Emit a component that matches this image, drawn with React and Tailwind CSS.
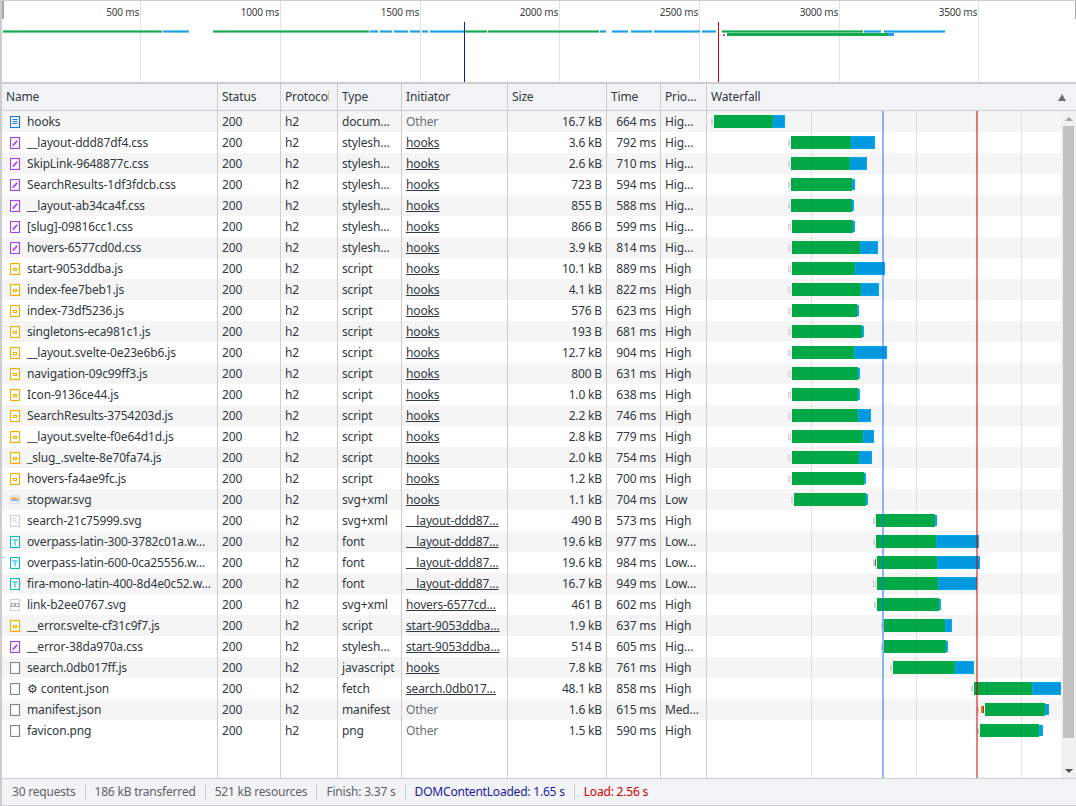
// App.jsx
// Panel de red de DevTools: vista general, tabla de peticiones y cascada
const COLS = 'grid grid-cols-[216px_63px_57px_64px_106px_99px_54px_46px_1fr]'
const CELL = 'border-r border-[#cdcdcf] px-1 overflow-hidden whitespace-nowrap'

// name, type, initiator, size, time, priority, icon, [espera inicio, espera fin, verde inicio, verde fin, azul fin]
const FILAS = [
  ['hooks', 'docum…', 'Other', '16.7 kB', '664 ms', 'Hig…', 'doc', [711, 713, 714, 773, 785]],
  ['__layout-ddd87df4.css', 'stylesh…', 'hooks', '3.6 kB', '792 ms', 'Hig…', 'css', [788, 790, 791, 851, 875]],
  ['SkipLink-9648877c.css', 'stylesh…', 'hooks', '2.6 kB', '710 ms', 'Hig…', 'css', [788, 790, 791, 850, 867]],
  ['SearchResults-1df3fdcb.css', 'stylesh…', 'hooks', '723 B', '594 ms', 'Hig…', 'css', [788, 790, 791, 852, 855]],
  ['__layout-ab34ca4f.css', 'stylesh…', 'hooks', '855 B', '588 ms', 'Hig…', 'css', [788, 790, 791, 852, 854]],
  ['[slug]-09816cc1.css', 'stylesh…', 'hooks', '866 B', '599 ms', 'Hig…', 'css', [788, 791, 792, 853, 855, true]],
  ['hovers-6577cd0d.css', 'stylesh…', 'hooks', '3.9 kB', '814 ms', 'Hig…', 'css', [788, 791, 792, 860, 878, true]],
  ['start-9053ddba.js', 'script', 'hooks', '10.1 kB', '889 ms', 'High', 'js', [788, 791, 792, 855, 885, true]],
  ['index-fee7beb1.js', 'script', 'hooks', '4.1 kB', '822 ms', 'High', 'js', [788, 791, 792, 861, 879, true]],
  ['index-73df5236.js', 'script', 'hooks', '576 B', '623 ms', 'High', 'js', [788, 791, 792, 857, 858, true]],
  ['singletons-eca981c1.js', 'script', 'hooks', '193 B', '681 ms', 'High', 'js', [788, 791, 792, 862, 864, true]],
  ['__layout.svelte-0e23e6b6.js', 'script', 'hooks', '12.7 kB', '904 ms', 'High', 'js', [788, 791, 792, 854, 887, true]],
  ['navigation-09c99ff3.js', 'script', 'hooks', '800 B', '631 ms', 'High', 'js', [788, 791, 792, 858, 859, true]],
  ['Icon-9136ce44.js', 'script', 'hooks', '1.0 kB', '638 ms', 'High', 'js', [788, 791, 792, 858, 860, true]],
  ['SearchResults-3754203d.js', 'script', 'hooks', '2.2 kB', '746 ms', 'High', 'js', [788, 791, 792, 858, 871, true]],
  ['__layout.svelte-f0e64d1d.js', 'script', 'hooks', '2.8 kB', '779 ms', 'High', 'js', [788, 791, 792, 863, 874, true]],
  ['_slug_.svelte-8e70fa74.js', 'script', 'hooks', '2.0 kB', '754 ms', 'High', 'js', [788, 791, 792, 859, 872, true]],
  ['hovers-fa4ae9fc.js', 'script', 'hooks', '1.2 kB', '700 ms', 'High', 'js', [788, 791, 792, 864, 866, true]],
  ['stopwar.svg', 'svg+xml', 'hooks', '1.1 kB', '704 ms', 'Low', 'war', [791, 793, 794, 866, 868]],
  ['search-21c75999.svg', 'svg+xml', '__layout-ddd87…', '490 B', '573 ms', 'High', 'search', [873, 875, 876, 935, 937]],
  ['overpass-latin-300-3782c01a.w…', 'font', '__layout-ddd87…', '19.6 kB', '977 ms', 'Low…', 'font', [873, 875, 876, 936, 979]],
  ['overpass-latin-600-0ca25556.w…', 'font', '__layout-ddd87…', '19.6 kB', '984 ms', 'Low…', 'font', [873, 875, 877, 937, 980]],
  ['fira-mono-latin-400-8d4e0c52.w…', 'font', '__layout-ddd87…', '16.7 kB', '949 ms', 'Low…', 'font', [873, 876, 877, 938, 977, true]],
  ['link-b2ee0767.svg', 'svg+xml', 'hovers-6577cd…', '461 B', '602 ms', 'High', 'link', [874, 876, 877, 939, 941]],
  ['__error.svelte-cf31c9f7.js', 'script', 'start-9053ddba…', '1.9 kB', '637 ms', 'High', 'js', [881, 883, 884, 945, 952]],
  ['__error-38da970a.css', 'stylesh…', 'start-9053ddba…', '514 B', '605 ms', 'Hig…', 'css', [881, 883, 884, 946, 948]],
  ['search.0db017ff.js', 'javascript', 'hooks', '7.8 kB', '761 ms', 'High', 'plain', [890, 892, 893, 955, 974]],
  ['⚙ content.json', 'fetch', 'search.0db017…', '48.1 kB', '858 ms', 'High', 'plain', [971, 973, 974, 1032, 1061]],
  ['manifest.json', 'manifest', 'Other', '1.6 kB', '615 ms', 'Med…', 'plain', [977, 979, 985, 1045, 1049]],
  ['favicon.png', 'png', 'Other', '1.5 kB', '590 ms', 'High', 'plain', [977, 979, 980, 1039, 1043]],
]

const ORIGEN = 707 // x donde empieza la columna de cascada

function FileIcon({ tipo }) {
  if (tipo === 'war') {
    return (
      <svg width="12" height="12" viewBox="0 0 12 12" className="shrink-0">
        <rect x="0" y="1.5" width="10" height="8" fill="#cfd1d4" />
        <rect x="1" y="2.5" width="8" height="6" fill="#fff" />
        <rect x="1.5" y="3.5" width="4" height="2" fill="#f28b54" />
        <rect x="5" y="3.5" width="3.5" height="2" fill="#fbc02d" />
        <rect x="1.5" y="5.5" width="7" height="1.5" fill="#6fa8f0" />
      </svg>
    )
  }
  if (tipo === 'search') {
    return (
      <svg width="12" height="12" viewBox="0 0 12 12" className="shrink-0">
        <rect x="0.5" y="0.5" width="9" height="11" fill="#fff" stroke="#cfd1d4" strokeWidth="1.2" />
        <circle cx="4.2" cy="4.6" r="1.7" fill="none" stroke="#cfd1d4" />
        <path d="M5.5 6 L7.6 8.2" stroke="#cfd1d4" />
      </svg>
    )
  }
  if (tipo === 'link') {
    return (
      <svg width="12" height="12" viewBox="0 0 12 12" className="shrink-0">
        <rect x="0.5" y="0.5" width="9" height="11" fill="#fff" stroke="#cfd1d4" strokeWidth="1.2" />
        <rect x="1.5" y="4.5" width="3" height="3" fill="none" stroke="#a9acb0" />
        <rect x="5.5" y="4.5" width="3" height="3" fill="none" stroke="#a9acb0" />
      </svg>
    )
  }
  const color = { doc: '#1a73e8', css: '#a142f4', js: '#f9ab00', font: '#12b5cb', plain: '#80868b' }[tipo]
  return (
    <svg width="12" height="12" viewBox="0 0 12 12" className="shrink-0">
      <rect x="0.5" y="0.5" width="9" height="11" fill="#fff" stroke={color} strokeWidth="1.2" />
      {tipo === 'doc' && <path d="M2.5 3.5h5M2.5 5.5h5M2.5 7.5h5" stroke={color} />}
      {tipo === 'css' && <path d="M2.8 8.6 L7.2 3.8" stroke={color} strokeWidth="1.7" />}
      {tipo === 'js' && <rect x="3.5" y="5.5" width="3" height="2" fill="none" stroke={color} />}
      {tipo === 'font' && <path d="M2.5 3h5v2h-1.6v4.5h-1.8v-4.5h-1.6z" fill="#6fd3e2" />}
    </svg>
  )
}

function Barra({ datos }) {
  const [espA, espB, verdeA, verdeB, azulB, hueca] = datos
  const angosta = azulB - verdeB < 6
  return (
    <>
      <div
        className={`absolute top-[8px] h-[6px] ${hueca ? 'border border-[#cfcfcf] bg-white' : 'bg-[#d2d2d2]'}`}
        style={{ left: espA - ORIGEN, width: espB - espA }}
      />
      <div
        className="absolute top-[4px] h-[13px] bg-[#00a846]"
        style={{ left: verdeA - ORIGEN, width: verdeB - verdeA }}
      />
      <div
        className={`absolute bg-[#0299de] border border-[#03a9f4] ${angosta ? 'top-[5px] h-[11px]' : 'top-[4px] h-[13px]'}`}
        style={{ left: verdeB - ORIGEN, width: azulB - verdeB }}
      />
    </>
  )
}

function Fila({ fila, indice }) {
  const [nombre, tipo, iniciador, size, time, prio, icono, barra] = fila
  const esOther = iniciador === 'Other'
  return (
    <div className={`${COLS} h-[21px] leading-[21px] ${indice % 2 === 0 ? 'bg-[#f5f5f5]' : 'bg-white'}`}>
      <div className={`${CELL} flex items-center gap-[5px] pl-2`}>
        <FileIcon tipo={icono} />
        <span>{nombre}</span>
      </div>
      <div className={CELL}>200</div>
      <div className={CELL}>h2</div>
      <div className={CELL}>{tipo}</div>
      <div className={CELL}>
        {esOther ? <span className="text-[#6a6f75]">{iniciador}</span> : <span className="underline">{iniciador}</span>}
      </div>
      <div className={`${CELL} text-right`}>{size}</div>
      <div className={`${CELL} text-right`}>{time}</div>
      <div className={CELL}>{prio}</div>
      <div className="relative">
        <Barra datos={barra} />
        {nombre === 'manifest.json' && (
          <div className="absolute left-[274px] top-[7px] h-[7px] w-[3px] border-r border-[#c2185b] bg-[#d9860c]" />
        )}
        {nombre.startsWith('overpass-latin-600') && (
          <div className="absolute left-[168px] top-[7px] h-[7px] w-px bg-[#666]" />
        )}
      </div>
    </div>
  )
}

function Overview() {
  const marcas = [
    ['500 ms', 140],
    ['1000 ms', 280],
    ['1500 ms', 420],
    ['2000 ms', 559],
    ['2500 ms', 699],
    ['3000 ms', 839],
    ['3500 ms', 978],
  ]
  const fila1 = [
    [3, 162, 'g'], [163, 189, 'b'], [213, 369, 'g'], [370, 378, 'b'], [380, 392, 'b'], [394, 408, 'b'], [410, 420, 'b'],
    [422, 428, 'b'], [430, 464, 'b'], [465, 487, 'g'], [488, 599, 'g'], [600, 606, 'b'], [612, 628, 'b'], [631, 652, 'b'],
    [654, 700, 'b'], [702, 716, 'b'], [722, 863, 'g'], [864, 881, 'b'], [884, 945, 'b'],
  ]
  return (
    <div className="relative h-[83px] shrink-0 overflow-hidden border-b-2 border-[#cdcdcf] bg-white">
      {marcas.map(([texto, x]) => (
        <div key={texto} className="absolute top-0 bottom-0 w-px bg-[#e2e2e2]" style={{ left: x - 2 }}>
          <span className="absolute right-[2px] top-[4px] whitespace-nowrap bg-white text-[10px] leading-[14px] tracking-[-0.2px] text-[#3c4043]">
            {texto}
          </span>
        </div>
      ))}
      {fila1.map(([a, b, c]) => (
        <div
          key={a}
          className={`absolute top-[29px] h-[3px] border-y border-white/40 ${c === 'g' ? 'bg-[#12a94f]' : 'bg-[#1d9fe8]'}`}
          style={{ left: a - 2, width: b - a }}
        />
      ))}
      <div className="absolute left-[725px] top-[32px] h-[3px] w-[161px] bg-[#12a94f]" />
      <div className="absolute left-[886px] top-[32px] h-[3px] w-[6px] bg-[#1d9fe8]" />
      <div className="absolute left-[721px] top-[33px] h-[2px] w-[2px] bg-[#d23ad2]" />
      <div className="absolute left-[462px] top-[21px] bottom-0 w-px bg-[#1a1aa6]" />
      <div className="absolute left-[716px] top-[21px] bottom-0 w-px bg-[#d00000]" />
      <div className="absolute left-0 top-0 h-[18px] w-[2px] bg-[#a8a8a8]" />
      <div className="absolute right-0 top-0 h-[18px] w-[1px] bg-[#a8a8a8]" />
    </div>
  )
}

export default function App() {
  const lineas = [105, 210, 315]
  return (
    <div className="flex h-[806px] w-[1076px] flex-col overflow-hidden border-t border-l-2 border-b border-[#cdcdcf] bg-white font-['Noto_Sans',sans-serif] text-[12px] tracking-[-0.15px] text-[#303942]">
      <Overview />

      {/* Cabecera de la tabla */}
      <div className={`${COLS} h-[27px] shrink-0 border-b border-[#cdcdcf] bg-[#f1f3f4] leading-[26px]`}>
        <div className={CELL}>Name</div>
        <div className={CELL}>Status</div>
        <div className={CELL}>
          <span className="block w-[44px] overflow-hidden">Protocol</span>
        </div>
        <div className={CELL}>Type</div>
        <div className={CELL}>Initiator</div>
        <div className={CELL}>Size</div>
        <div className={CELL}>Time</div>
        <div className={CELL}>Prio…</div>
        <div className="relative flex items-center justify-between pl-1 pr-[10px]">
          <span>Waterfall</span>
          <span className="h-0 w-0 border-x-[4px] border-b-[7px] border-x-transparent border-b-[#6e6e6e]" />
        </div>
      </div>

      {/* Cuerpo: filas + barra de scroll */}
      <div className="flex min-h-0 flex-1">
        <div className="relative flex min-w-0 flex-1 flex-col">
          {FILAS.map((fila, i) => (
            <Fila key={fila[0]} fila={fila} indice={i} />
          ))}
          <div className={`${COLS} flex-1`}>
            <div className={CELL} />
            <div className={CELL} />
            <div className={CELL} />
            <div className={CELL} />
            <div className={CELL} />
            <div className={CELL} />
            <div className={CELL} />
            <div className={CELL} />
            <div />
          </div>
          {/* Líneas de la cascada, por encima de las barras */}
          {lineas.map((x) => (
            <div key={x} className="absolute top-0 bottom-0 w-px bg-black/10" style={{ left: 704 + x }} />
          ))}
          <div className="absolute top-0 bottom-0 left-[880px] w-[2px] bg-[#1a73e8]/50" />
          <div className="absolute top-0 bottom-0 left-[974px] w-[2px] bg-[#c80000]/50" />
        </div>
        <div className="relative w-[15px] shrink-0 bg-[#f1f1f1]">
          <span className="absolute left-[4px] top-[6px] h-0 w-0 border-x-[4px] border-b-[4px] border-x-transparent border-b-[#a3a3a3]" />
          <div className="absolute left-[2px] right-[2px] top-[15px] h-[612px] bg-[#c1c1c1]" />
          <span className="absolute left-[4px] bottom-[5px] h-0 w-0 border-x-[4px] border-t-[4px] border-x-transparent border-t-[#505050]" />
        </div>
      </div>

      {/* Pie de estado */}
      <div className="flex h-[27px] shrink-0 items-center border-t border-[#cdcdcf] bg-[#f1f3f4] pl-[10px] tracking-[-0.2px] text-[#5f6368]">
        <span>30 requests</span>
        <span className="mx-[9px] h-[16px] w-px bg-[#cdcdcf]" />
        <span>186 kB transferred</span>
        <span className="mx-[9px] h-[16px] w-px bg-[#cdcdcf]" />
        <span>521 kB resources</span>
        <span className="mx-[9px] h-[16px] w-px bg-[#cdcdcf]" />
        <span>Finish: 3.37 s</span>
        <span className="mx-[9px] h-[16px] w-px bg-[#cdcdcf]" />
        <span className="text-[#1a1aa6]">DOMContentLoaded: 1.65 s</span>
        <span className="mx-[9px] h-[16px] w-px bg-[#cdcdcf]" />
        <span className="text-[#d00000]">Load: 2.56 s</span>
      </div>
    </div>
  )
}
